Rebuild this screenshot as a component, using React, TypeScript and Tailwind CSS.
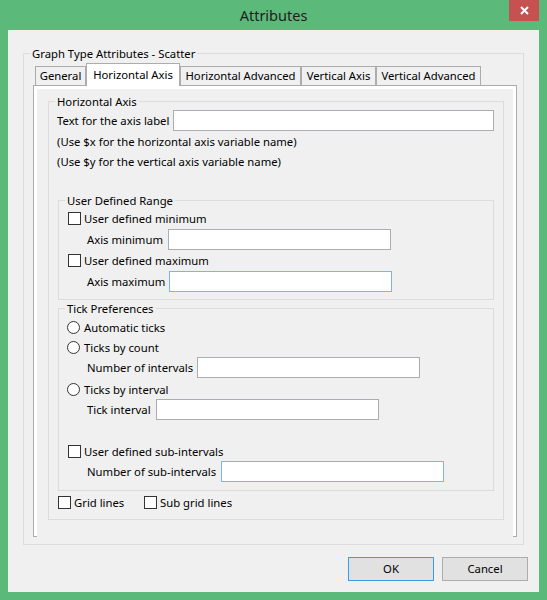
import type { ReactNode } from 'react';

function GroupBox({ title, className = '', children }: { title: string; className?: string; children: ReactNode }) {
  return (
    <fieldset className={`border border-[#dcdcdc] ${className}`}>
      <legend className="ml-[6px] px-[2px] leading-4">
        <span className="relative top-px">{title}</span>
      </legend>
      {children}
    </fieldset>
  );
}

function CheckRow({ label, className = '' }: { label: string; className?: string }) {
  return (
    <div className={`flex h-[20px] items-center gap-[3px] ${className}`}>
      <span className="h-[13px] w-[13px] border border-[#333] bg-white" />
      <span className="mt-[2px]">{label}</span>
    </div>
  );
}

function RadioRow({ label, className = '' }: { label: string; className?: string }) {
  return (
    <div className={`flex h-[20px] items-center gap-[4px] ${className}`}>
      <span className="h-[13px] w-[13px] rounded-full border border-[#333] bg-white" />
      <span className="mt-[2px]">{label}</span>
    </div>
  );
}

function FieldRow({
  label,
  labelWidth,
  focused = false,
  className = '',
}: {
  label: string;
  labelWidth: string;
  focused?: boolean;
  className?: string;
}) {
  return (
    <div className={`flex h-[21px] items-center pl-[28px] ${className}`}>
      <span className={`mt-[2px] ${labelWidth}`}>{label}</span>
      <input
        readOnly
        className={`h-[21px] w-[223px] border bg-white outline-none ${
          focused ? 'border-[#7eb4ea]' : 'border-[#abadb3]'
        }`}
      />
    </div>
  );
}

const tabs = ['General', 'Horizontal Axis', 'Horizontal Advanced', 'Vertical Axis', 'Vertical Advanced'];
const tabWidths = ['w-[51px]', 'w-[94px]', 'w-[121px]', 'w-[75px]', 'w-[105px]'];

export default function App() {
  return (
    <div className="flex h-[600px] w-[547px] flex-col bg-[#5bb97a] font-['Noto_Sans',sans-serif] text-[11.3px] text-black">
      {/* Barra de título */}
      <div className="relative flex h-[30px] items-center justify-center">
        <span className="pt-[1px] text-[14.5px] text-[#1e1e1e]">Attributes</span>
        <div className="absolute right-[8px] top-0 flex h-[21px] w-[30px] items-center justify-center bg-[#c75050]">
          <svg width="9" height="9" viewBox="0 0 9 9">
            <path d="M1 1 L8 8 M8 1 L1 8" stroke="white" strokeWidth="2" />
          </svg>
        </div>
      </div>

      {/* Conteúdo */}
      <div className="mx-[8px] mb-[8px] flex flex-1 flex-col bg-[#f0f0f0]">
        <GroupBox title="Graph Type Attributes - Scatter" className="mx-[15px] mt-[15px] pb-[7px]">
          {/* Abas */}
          <div className="ml-[11px] flex items-end pt-[2px]">
            {tabs.map((t, i) =>
              i === 1 ? (
                <div
                  key={t}
                  className={`relative z-10 -mb-px flex h-[23px] items-center justify-center border border-b-0 border-[#acacac] bg-white ${tabWidths[i]}`}
                >
                  <span>{t}</span>
                </div>
              ) : (
                <div
                  key={t}
                  className={`flex h-[19px] items-center justify-center border border-b-0 border-[#acacac] bg-[#f0f0f0] ${tabWidths[i]}`}
                >
                  <span className="mt-[1px]">{t}</span>
                </div>
              )
            )}
          </div>

          {/* Painel da aba */}
          <div className="ml-[9px] flex h-[452px] w-[484px] flex-col border-x border-t border-[#acacac] bg-white">
            <div className="mx-[3px] mt-[3px] flex flex-1 flex-col bg-[#f0f0f0]">
              <GroupBox title="Horizontal Axis" className="ml-[11px] mt-[4px] w-[456px] pb-[7px]">
                <div className="flex flex-col pl-[8px] pr-[9px]">
                  <div className="mt-[1px] flex h-[21px] items-center">
                    <span className="mt-[2px] w-[116px]">Text for the axis label</span>
                    <input readOnly className="h-[21px] min-w-0 flex-1 border border-[#abadb3] bg-white outline-none" />
                  </div>
                  <div className="pt-[1px] leading-5">(Use $x for the horizontal axis variable name)</div>
                  <div className="leading-5">(Use $y for the vertical axis variable name)</div>

                  <GroupBox title="User Defined Range" className="ml-[1px] mt-[20px] pb-[7px]">
                    <CheckRow label="User defined minimum" className="pl-[9px]" />
                    <FieldRow label="Axis minimum" labelWidth="w-[81px]" className="mt-[1px]" />
                    <CheckRow label="User defined maximum" className="pl-[9px]" />
                    <FieldRow label="Axis maximum" labelWidth="w-[82px]" focused className="mt-[1px]" />
                  </GroupBox>

                  <GroupBox title="Tick Preferences" className="ml-[1px] pb-[8px]">
                    <RadioRow label="Automatic ticks" className="mt-[1px] pl-[8px]" />
                    <RadioRow label="Ticks by count" className="pl-[8px]" />
                    <FieldRow label="Number of intervals" labelWidth="w-[110px]" />
                    <RadioRow label="Ticks by interval" className="mt-[1px] pl-[8px]" />
                    <FieldRow label="Tick interval" labelWidth="w-[69px]" />
                    <CheckRow label="User defined sub-intervals" className="mt-[21px] pl-[9px]" />
                    <FieldRow label="Number of sub-intervals" labelWidth="w-[134px]" focused />
                  </GroupBox>

                  <div className="ml-[1px] mt-[1px] flex">
                    <CheckRow label="Grid lines" className="w-[86px]" />
                    <CheckRow label="Sub grid lines" />
                  </div>
                </div>
              </GroupBox>
            </div>
            <div className="flex h-px">
              <div className="w-[3px] bg-[#acacac]" />
              <div className="flex-1 bg-[#f0f0f0]" />
              <div className="w-[3px] bg-[#acacac]" />
            </div>
          </div>
        </GroupBox>

        {/* Botões */}
        <div className="mt-[12px] flex justify-end gap-[8px] pr-[11px]">
          <button className="flex h-[24px] w-[86px] items-center justify-center border border-[#3c9ae6] bg-[#e1e1e1]">
            <span className="mt-[1px]">OK</span>
          </button>
          <button className="flex h-[24px] w-[86px] items-center justify-center border border-[#adadad] bg-[#e1e1e1]">
            <span className="mt-[1px]">Cancel</span>
          </button>
        </div>
      </div>
    </div>
  );
}
